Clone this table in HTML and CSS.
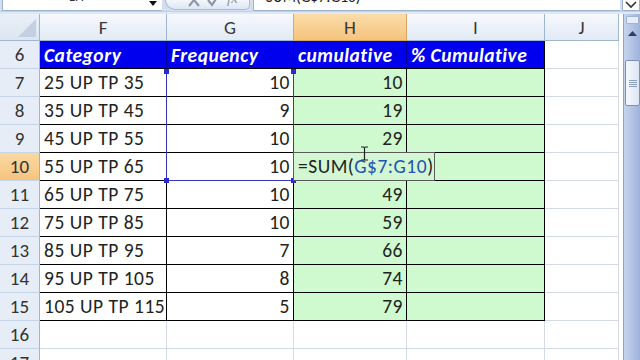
FILE: index.html
```html
<!DOCTYPE html>
<html>
<head>
<meta charset="utf-8">
<link rel="stylesheet" href="styles.css">
</head>
<body>
<div class="app">
  <div class="fbar">
    <div class="namebox">
      <span class="nb-text">LN</span>
      <svg class="nb-arrow" width="8" height="6" viewBox="0 0 8 6"><path d="M0 0H8L4 5Z" fill="#111"/></svg>
    </div>
    <div class="fbtns">
      <div class="pill">
        <svg class="ic" width="14" height="16" viewBox="0 0 14 16"><path d="M2 2L12 14M12 2L2 14" stroke="#8d97a6" stroke-width="2.2" fill="none"/></svg>
        <svg class="ic" width="14" height="16" viewBox="0 0 14 16"><path d="M1 8L5 13L13 1" stroke="#8d97a6" stroke-width="2.2" fill="none"/></svg>
        <span class="fx">fx</span>
      </div>
    </div>
    <div class="finput"><span class="ftext">=SUM(G$7:G10)</span></div>
    <div class="fexpand">
      <svg width="12" height="8" viewBox="0 0 12 8"><path d="M1 1L6 6L11 1" stroke="#333" stroke-width="1.6" fill="none"/></svg>
    </div>
  </div>
  <div class="sep"></div>
  <div class="main">
    <div class="grid">
      <div class="corner"><div class="tri"></div></div>
      <div class="ch">F</div><div class="ch">G</div><div class="ch act">H</div><div class="ch">I</div><div class="ch">J</div>

      <div class="rh">6</div>
      <div class="c hd">Category</div><div class="c hd">Frequency</div><div class="c hd">cumulative</div><div class="c hd last">% Cumulative</div><div class="c"></div>

      <div class="rh">7</div>
      <div class="c tb">25 UP TP 35</div>
      <div class="c tb num selwrap">10
        <div class="sel"><i class="h tl"></i><i class="h tr"></i><i class="h bl"></i><i class="h br"></i></div>
      </div>
      <div class="c tb num g">10</div><div class="c tb g"></div><div class="c"></div>

      <div class="rh">8</div>
      <div class="c tb">35 UP TP 45</div><div class="c tb num">9</div><div class="c tb num g">19</div><div class="c tb g"></div><div class="c"></div>

      <div class="rh">9</div>
      <div class="c tb">45 UP TP 55</div><div class="c tb num">10</div><div class="c tb num g">29</div><div class="c tb g"></div><div class="c"></div>

      <div class="rh act">10</div>
      <div class="c tb">55 UP TP 65</div><div class="c tb num">10</div>
      <div class="c tb g editwrap">
        <div class="editor">=SUM(<span class="ref">G$7:G10</span>)<span class="caret"></span></div>
        <svg class="ibeam" width="9" height="15" viewBox="0 0 9 15"><path d="M1 1H3.5Q4.5 1 4.5 2V13Q4.5 14 3.5 14H1M8 1H5.5Q4.5 1 4.5 2M4.5 13Q4.5 14 5.5 14H8" stroke="#222" stroke-width="1.2" fill="none"/></svg>
      </div>
      <div class="c tb g"></div><div class="c"></div>

      <div class="rh">11</div>
      <div class="c tb">65 UP TP 75</div><div class="c tb num">10</div><div class="c tb num g">49</div><div class="c tb g"></div><div class="c"></div>

      <div class="rh">12</div>
      <div class="c tb">75 UP TP 85</div><div class="c tb num">10</div><div class="c tb num g">59</div><div class="c tb g"></div><div class="c"></div>

      <div class="rh">13</div>
      <div class="c tb">85 UP TP 95</div><div class="c tb num">7</div><div class="c tb num g">66</div><div class="c tb g"></div><div class="c"></div>

      <div class="rh">14</div>
      <div class="c tb">95 UP TP 105</div><div class="c tb num">8</div><div class="c tb num g">74</div><div class="c tb g"></div><div class="c"></div>

      <div class="rh">15</div>
      <div class="c tb">105 UP TP 115</div><div class="c tb num">5</div><div class="c tb num g">79</div><div class="c tb g"></div><div class="c"></div>

      <div class="rh">16</div>
      <div class="c"></div><div class="c"></div><div class="c"></div><div class="c"></div><div class="c"></div>

      <div class="rh">17</div>
      <div class="c"></div><div class="c"></div><div class="c"></div><div class="c"></div><div class="c"></div>
    </div>
    <div class="gap"></div>
    <div class="vscroll">
      <div class="split"></div>
      <div class="up"><svg width="9" height="5" viewBox="0 0 9 5"><path d="M0 5L4.5 0L9 5Z" fill="#2d3e5e"/></svg></div>
      <div class="track">
        <div class="thumb"><div class="grip"></div></div>
      </div>
    </div>
  </div>
</div>
</body>
</html>
```

FILE: styles.css
```css
html, body {
  margin: 0;
  padding: 0;
  width: 640px;
  height: 360px;
  overflow: hidden;
  background: #fff;
}

.app {
  width: 640px;
  height: 360px;
  display: flex;
  flex-direction: column;
  font-family: Calibri, Carlito, Lato, "Liberation Sans", sans-serif;
  color: #222;
}

/* formula bar */
.fbar {
  flex: none;
  height: 11px;
  display: flex;
  background: #d3dff0;
  overflow: hidden;
}

.namebox {
  width: 160px;
  margin-left: 2px;
  background: #fff;
  border-bottom: 1px solid #9fb2cd;
  border-left: 1px solid #9fb2cd;
  box-sizing: border-box;
  display: flex;
  align-items: flex-start;
}

.nb-text {
  margin-left: 66px;
  margin-top: -11px;
  font-size: 14px;
  line-height: 16px;
  color: #333;
}

.nb-arrow {
  margin-left: auto;
  margin-right: 5px;
  margin-top: 1px;
}

.fbtns {
  width: 91px;
  display: flex;
  align-items: flex-start;
}

.pill {
  margin-left: 3px;
  width: 85px;
  height: 10px;
  box-sizing: border-box;
  border: 1px solid #a9bcd6;
  border-top: none;
  border-radius: 0 0 6px 12px;
  background: linear-gradient(#f4f7fc, #dce6f3);
  display: flex;
  align-items: flex-start;
  gap: 6px;
  padding-left: 21px;
}

.ic {
  margin-top: -8px;
  flex: none;
}

.fx {
  margin-top: -10px;
  font-family: "Liberation Serif", serif;
  font-style: italic;
  font-size: 15px;
  line-height: 16px;
  color: #8d97a6;
}

.finput {
  width: 367px;
  background: #fff;
  border-bottom: 1px solid #9fb2cd;
  border-left: 1px solid #9fb2cd;
  box-sizing: border-box;
  display: flex;
  align-items: flex-start;
}

.ftext {
  margin-left: 4px;
  margin-top: -11px;
  font-size: 15.5px;
  line-height: 16px;
  color: #222;
}

.fexpand {
  margin-left: 2px;
  width: 18px;
  background: #fff;
  border: 1px solid #9fb2cd;
  border-top: none;
  box-sizing: border-box;
  display: flex;
  justify-content: center;
  align-items: flex-start;
  padding-top: 1px;
}

.sep {
  flex: none;
  height: 3px;
  background: #dfe8f5;
  border-top: 1px solid #c2d0e4;
  box-sizing: border-box;
}

/* sheet */
.main {
  flex: 1;
  display: flex;
  min-height: 0;
  overflow: hidden;
}

.grid {
  display: grid;
  grid-template-columns: 40px 127px 127px 113px 138px 74px;
  grid-template-rows: 27px repeat(12, 28px);
  flex: none;
  font-size: 19px;
}

.grid > div {
  box-sizing: border-box;
}

.corner {
  background: linear-gradient(#eaf0f8, #dce5f1);
  border-right: 1px solid #9eb6ce;
  border-bottom: 1px solid #9eb6ce;
  position: relative;
}

.tri {
  position: absolute;
  right: 3px;
  bottom: 3px;
  width: 0;
  height: 0;
  border-left: 18px solid transparent;
  border-bottom: 18px solid #c3d0e2;
}

.ch {
  background: linear-gradient(#f6f9fd, #e2eaf5);
  border-right: 1px solid #9eb6ce;
  border-bottom: 1px solid #9eb6ce;
  text-align: center;
  line-height: 26px;
  padding-top: 1px;
  color: #3a3a3a;
}

.ch.act {
  background: linear-gradient(#fbdca8, #f5c47e);
  border-right-color: #d6a75d;
  border-bottom-color: #d6a75d;
}

.rh {
  background: #e6edf7;
  border-right: 1px solid #9eb6ce;
  border-bottom: 1px solid #c5d4e6;
  text-align: center;
  line-height: 27px;
  color: #333;
}

.rh.act {
  background: linear-gradient(#fbd9a3, #f5c47e);
  border-right-color: #d6a75d;
}

.c {
  border-right: 1px solid #d4dbe6;
  border-bottom: 1px solid #d4dbe6;
  line-height: 27px;
  padding: 0 4px;
  white-space: nowrap;
  background: #fff;
  font-size: 19.5px;
  letter-spacing: 0.5px;
}

.hd {
  background: #0000ee;
  color: #fff;
  font-weight: bold;
  font-style: italic;
  border-right: 1px solid #00009a;
  border-bottom: 1px solid #000;
  padding-top: 2px;
  line-height: 25px;
}

.hd.last {
  border-right-color: #000;
}

.tb {
  border-right-color: #000;
  border-bottom-color: #000;
}

.num {
  text-align: right;
  padding-right: 3px;
}

.g {
  background: #cff9cf;
}

/* reference range highlight G7:G10 */
.selwrap {
  position: relative;
  z-index: 2;
}

.sel {
  position: absolute;
  left: -1px;
  top: -1px;
  width: 128px;
  height: 113px;
  border: 1px solid #3535c8;
  border-top-color: transparent;
  box-sizing: border-box;
  pointer-events: none;
}

.sel .h {
  position: absolute;
  width: 5px;
  height: 5px;
  background: #2a2ad0;
}
.sel .tl { left: -3px; top: 0; }
.sel .tr { right: -3px; top: 0; }
.sel .bl { left: -3px; bottom: -3px; }
.sel .br { right: -3px; bottom: -3px; }

/* in-cell editor */
.editwrap {
  position: relative;
  z-index: 3;
}

.editor {
  position: absolute;
  left: -1px;
  top: -1px;
  width: 142px;
  height: 29px;
  box-sizing: border-box;
  border: 1px solid #5b5b5b;
  background: #d2f7d2;
  padding-left: 4px;
  line-height: 27px;
  color: #222;
  white-space: nowrap;
  display: flex;
  align-items: center;
}

.ref {
  color: #2253b8;
}

.caret {
  display: inline-block;
  width: 1px;
  height: 20px;
  background: #000;
  margin-left: 1px;
}

.ibeam {
  position: absolute;
  left: 66px;
  top: -7px;
}

.gap {
  width: 4px;
  flex: none;
}

.vscroll {
  width: 18px;
  flex: none;
  display: flex;
  flex-direction: column;
  background: linear-gradient(90deg, #c6d4ec, #9cb0da);
  border-left: 1px solid #8ea4cc;
  box-sizing: border-box;
}

.split {
  height: 6px;
  margin: 2px 2px 0;
  background: #e8eef8;
  border: 1px solid #9fb3d4;
  border-radius: 1px;
}

.up {
  height: 18px;
  display: flex;
  justify-content: center;
  align-items: center;
}

.track {
  flex: 1;
  padding-top: 18px;
}

.thumb {
  margin: 0 1px;
  height: 44px;
  border: 1px solid #7891bf;
  border-radius: 2px;
  background: linear-gradient(90deg, #f6f8fc, #dde6f4);
  display: flex;
  align-items: center;
  justify-content: center;
}

.grip {
  width: 8px;
  height: 7px;
  background: repeating-linear-gradient(#8d9fbf 0 1px, transparent 1px 2px);
}
```
